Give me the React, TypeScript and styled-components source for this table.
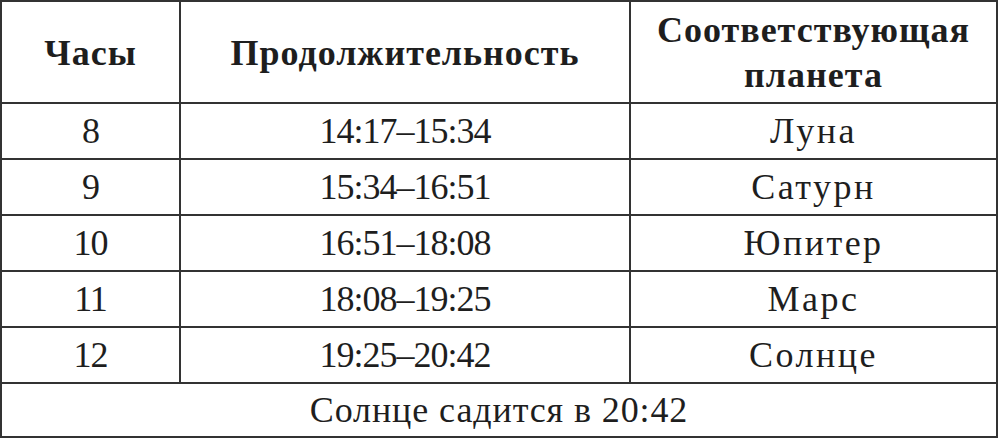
import styled, { createGlobalStyle } from "styled-components";

const GlobalStyle = createGlobalStyle`
  html, body {
    margin: 0;
    padding: 0;
    background: #fff;
  }
`;

const Wrapper = styled.div`
  width: 1000px;
  height: 441px;
  padding: 0 2px 0 0;
  box-sizing: border-box;
  overflow: hidden;
`;

const Table = styled.table`
  width: 998px;
  border-collapse: collapse;
  font-family: "Liberation Serif", "DejaVu Serif", serif;
  color: #1e1e1e;
  table-layout: fixed;
`;

const HeadRow = styled.tr`
  height: 102px;
`;

const Row = styled.tr<{ $h?: number }>`
  height: ${(p) => p.$h ?? 56}px;
`;

const HeadCell = styled.th<{ $w?: number }>`
  width: ${(p) => (p.$w ? `${p.$w}px` : "auto")};
  border: 2px solid #333;
  font-size: 36px;
  font-weight: 700;
  line-height: 45px;
  letter-spacing: 1px;
  text-align: center;
  vertical-align: middle;
  padding: 2px 0 0;
`;

const Cell = styled.td<{ $spacing?: number }>`
  border: 2px solid #333;
  font-size: 36px;
  font-weight: 400;
  line-height: 40px;
  letter-spacing: ${(p) => p.$spacing ?? 0.5}px;
  text-align: center;
  vertical-align: middle;
  padding: 0;
`;

const rows = [
  { hour: "8", span: "14:17–15:34", planet: "Луна" },
  { hour: "9", span: "15:34–16:51", planet: "Сатурн" },
  { hour: "10", span: "16:51–18:08", planet: "Юпитер" },
  { hour: "11", span: "18:08–19:25", planet: "Марс" },
  { hour: "12", span: "19:25–20:42", planet: "Солнце" },
];

export default function App() {
  return (
    <Wrapper>
      <GlobalStyle />
      <Table>
        <thead>
          <HeadRow>
            <HeadCell $w={177}>Часы</HeadCell>
            <HeadCell $w={448}>Продолжительность</HeadCell>
            <HeadCell>
              Соответствующая
              <br />
              планета
            </HeadCell>
          </HeadRow>
        </thead>
        <tbody>
          {rows.map((r) => (
            <Row key={r.hour}>
              <Cell $spacing={-1}>{r.hour}</Cell>
              <Cell $spacing={-1}>{r.span}</Cell>
              <Cell $spacing={2.5}>{r.planet}</Cell>
            </Row>
          ))}
          <Row $h={54}>
            <Cell colSpan={3} $spacing={0.9}>
              Солнце садится в 20:42
            </Cell>
          </Row>
        </tbody>
      </Table>
    </Wrapper>
  );
}
